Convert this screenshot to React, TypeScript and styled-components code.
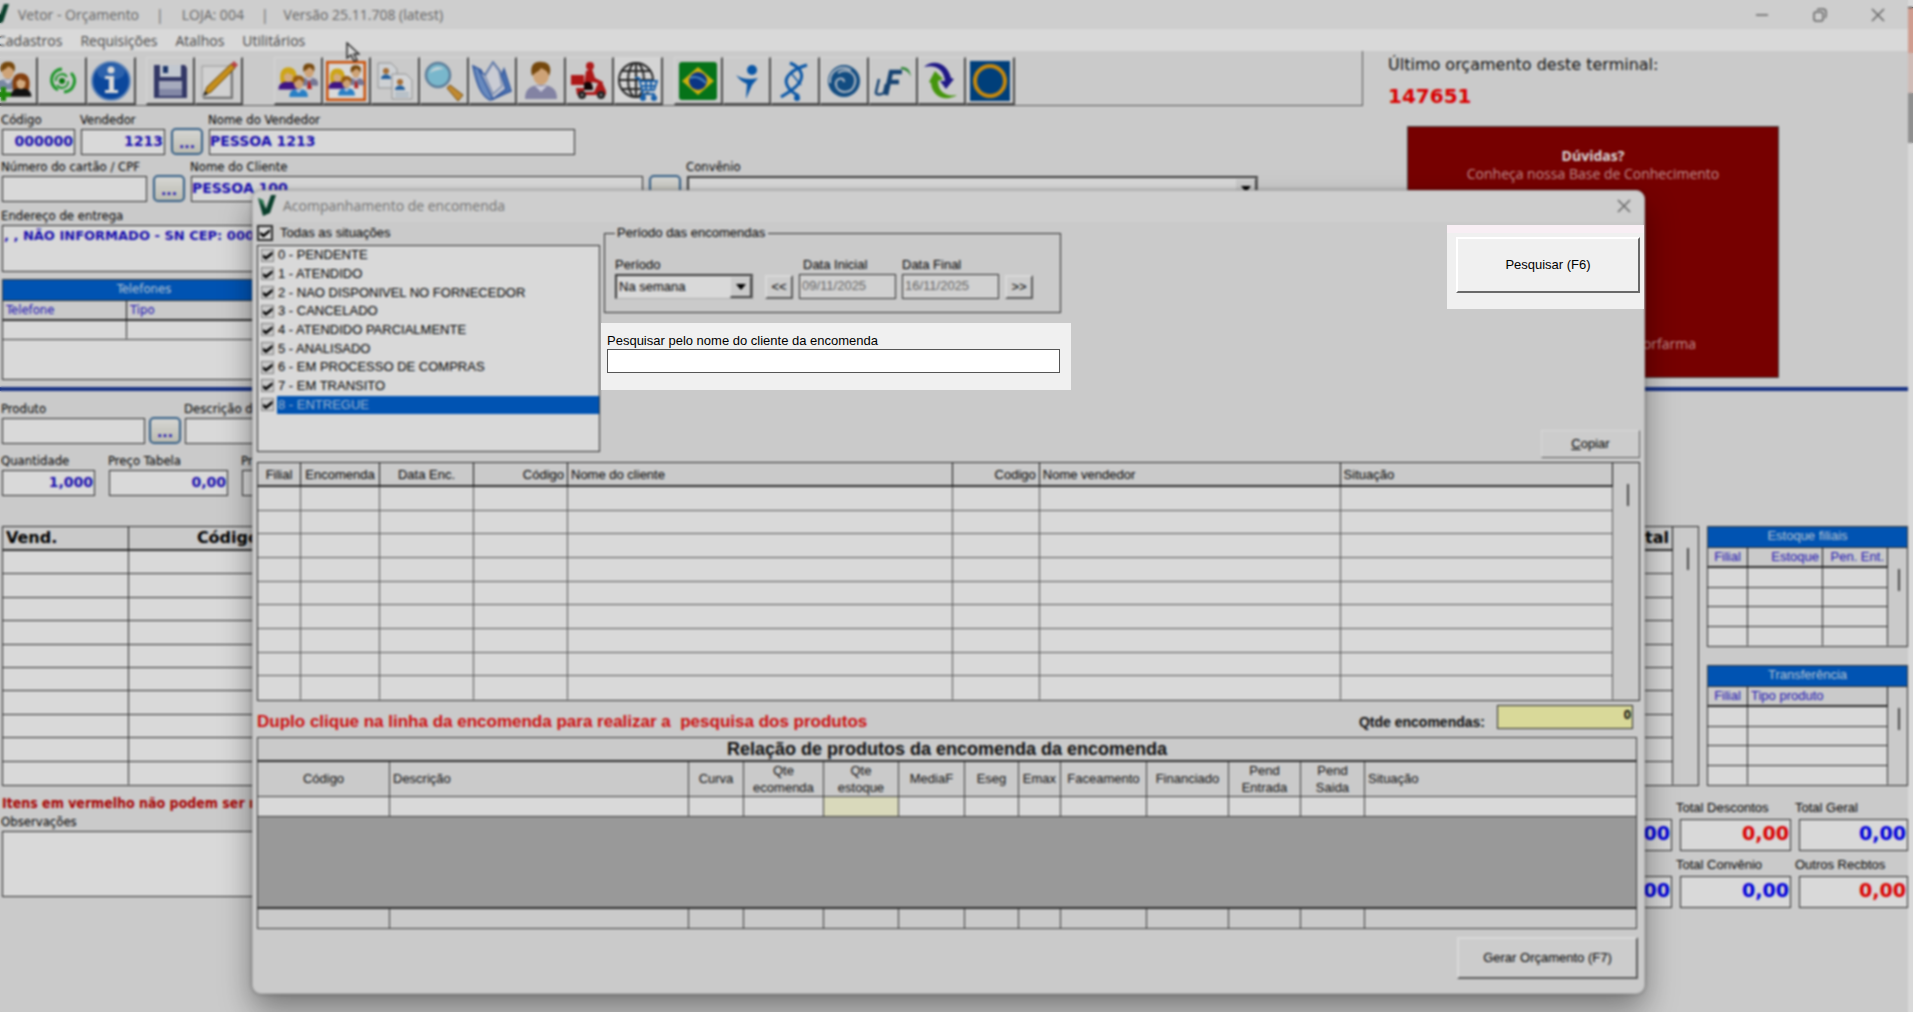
import React from "react";
import styled, { createGlobalStyle, css } from "styled-components";

const ui = `"Liberation Sans", Arial, sans-serif`;
const form = `"DejaVu Sans Condensed", "DejaVu Sans", Tahoma, sans-serif`;
const wide = `"DejaVu Sans", Verdana, sans-serif`;
const chrome = `"Open Sans", "Segoe UI", sans-serif`;

const face = "#eeeeee";
const line = "#333333";
const blue = "#0062d2";
const ink = "#1c10cc";

const GlobalStyle = createGlobalStyle`
  *, *::before, *::after { box-sizing: border-box; }
  body { margin: 0; background: ${face}; font: 13px/18px ${ui}; color: #000; overflow: hidden; }
  button, input, select, textarea { font: inherit; color: inherit; margin: 0; border-radius: 0; }
`;

/* ---------- window ---------- */

const Screen = styled.div`
  display: flex;
  min-height: 100vh;
  background: ${face};
`;

const Main = styled.main`
  flex: 1;
  min-width: 0;
`;

const Behind = styled.div`
  display: flex;
  flex-direction: column;
  width: 5px;
  background: #fff;
`;

const BehindPart = styled.span<{ $h: number; $c: string }>`
  height: ${(p) => p.$h}px;
  background: ${(p) => p.$c};
`;

const TitleBar = styled.header`
  display: flex;
  align-items: center;
  height: 29px;
  background: #f2f2f2;
  color: #777;
  font: 14px/20px ${chrome};
`;

const TitleText = styled.span<{ $gap?: number }>`
  margin-left: ${(p) => p.$gap ?? 18}px;
`;

const WindowButtons = styled.div`
  display: flex;
  gap: 18px;
  margin-left: auto;
  padding-right: 10px;
`;

const WindowButton = styled.button`
  display: grid;
  place-items: center;
  width: 40px;
  height: 26px;
  padding: 0;
  border: 0;
  background: none;
  color: #777;
`;

const MenuBar = styled.nav`
  display: flex;
  gap: 18px;
  height: 22px;
  margin-left: -3px;
  background: #fff;
  color: #555;
  font: 14px/24px ${chrome};
`;

const MenuItem = styled.button`
  padding: 0;
  border: 0;
  background: none;
  font: inherit;
`;

const Upper = styled.section`
  display: flex;
  min-height: 336px;
`;

const Workspace = styled.div`
  flex: 1;
  min-width: 0;
`;

const ToolBar = styled.div`
  display: flex;
  align-items: flex-end;
  height: 55px;
  border-right: 1px solid #666;
  border-bottom: 1px solid #666;
  overflow: hidden;
`;

const ToolGroup = styled.div<{ $w: number; $gap: number }>`
  display: flex;
  flex: none;
  width: ${(p) => p.$w}px;
  margin-left: ${(p) => p.$gap}px;
`;

const ToolButton = styled.button<{ $light?: boolean }>`
  display: grid;
  place-items: center;
  flex: 1;
  min-width: 0;
  height: 48px;
  padding: 0;
  border: solid;
  border-width: 1px 2px 2px 1px;
  border-color: #fafafa #555 #555 #fafafa;
  background: ${(p) => (p.$light ? "#fafafa" : face)};

  svg { width: 40px; height: 40px; display: block; }
`;

const Info = styled.aside`
  width: 545px;
  padding: 4px 0 0 25px;
  font: 16px/20px ${wide};
  color: #111;
`;

const BudgetNumber = styled.strong`
  display: block;
  margin: 9px 0 18px;
  font-size: 20px;
  line-height: 24px;
  color: #f00;
`;

const HelpCard = styled.div`
  display: flex;
  flex-direction: column;
  justify-content: space-between;
  width: 372px;
  height: 252px;
  margin-left: 19px;
  padding: 20px 82px 24px 0;
  border: 1px solid #555;
  background: #8b0000;
  color: #e0a8a8;
  font: 14px/18px ${chrome};
  text-align: right;
`;

const HelpText = styled.p`
  margin: 0 -82px 0 0;
  text-align: center;

  strong { display: block; color: #fff; }
`;

const HelpFoot = styled.span``;

/* ---------- form pieces ---------- */

const FormArea = styled.div`
  padding: 5px 0 0 2px;
`;

const Row = styled.div<{ $top?: number; $gap?: number }>`
  display: flex;
  align-items: flex-end;
  gap: ${(p) => p.$gap ?? 6}px;
  margin-top: ${(p) => p.$top ?? 0}px;
`;

const FieldBox = styled.div<{ $w?: number }>`
  flex: none;
  width: ${(p) => (p.$w ? p.$w + "px" : "auto")};
  font: 13px/18px ${form};
  color: #000;
  white-space: nowrap;

  label { display: block; margin-left: -1px; }
`;

const boxed = css`
  display: block;
  width: 100%;
  border: 1px solid ${line};
  outline: 0;
  background: #fff;
`;

const TextBox = styled.input<{ $right?: boolean }>`
  ${boxed}
  height: 26px;
  padding: 0 1px 3px 0;
  font: bold 14px/20px ${wide};
  color: ${ink};
  text-align: ${(p) => (p.$right ? "right" : "left")};
`;

const Area = styled.textarea<{ $h: number }>`
  ${boxed}
  height: ${(p) => p.$h}px;
  padding: 1px;
  resize: none;
  font: bold 13px/18px ${wide};
  color: ${ink};
`;

const Dots = styled.button`
  flex: none;
  width: 32px;
  height: 27px;
  padding: 2px 0 0;
  border: 2px solid #3d6f9e;
  border-radius: 5px;
  background: linear-gradient(#fcfcf8, #dcdcd0);
  font: bold 14px/20px ${wide};
  color: ${ink};
`;

const PlainSelect = styled.select`
  grid-area: 1 / 1 / 2 / 3;
  width: 100%;
  padding: 0 2px;
  border: 0;
  appearance: none;
  background: none;
  outline: 0;
`;

const Picker = styled.div<{ $h: number }>`
  display: grid;
  grid-template-columns: 1fr 22px;
  height: ${(p) => p.$h}px;
  border: solid;
  border-width: 2px 1px 1px 2px;
  border-color: #444 #888 #ccc #444;
  background: #fff;
`;

const PickerArrow = styled.span`
  grid-area: 1 / 2;
  display: grid;
  place-items: center;
  border: solid;
  border-width: 1px 2px 2px 1px;
  border-color: #fff #555 #555 #fff;
  background: ${face};
  pointer-events: none;
`;

const ArrowGlyph = () => (
  <PickerArrow>
    <svg width="10" height="6" viewBox="0 0 10 6" aria-hidden="true"><path d="M0 0h10L5 6z" /></svg>
  </PickerArrow>
);

type FieldProps = { id: string; label: string; value?: string; w: number; right?: boolean };

function Field({ id, label, value, w, right }: FieldProps) {
  return (
    <FieldBox $w={w}>
      <label htmlFor={id}>{label}</label>
      <TextBox id={id} defaultValue={value} $right={right} />
    </FieldBox>
  );
}

const Divider = styled.hr`
  height: 4px;
  margin: 0;
  border: 0;
  background: #1b3a9c;
`;

/* ---------- grids ---------- */

const GridFrame = styled.div<{ $h: number }>`
  display: flex;
  align-items: stretch;
  height: ${(p) => p.$h}px;
  border: 1px solid ${line};
`;

const GridTable = styled.table<{ $blue?: boolean; $big?: boolean; $soft?: boolean }>`
  flex: 1;
  width: 100%;
  min-width: 0;
  height: 100%;
  border-collapse: separate;
  border-spacing: 0;
  table-layout: fixed;
  background: #fff;

  th {
    height: ${(p) => (p.$blue ? 20 : 24)}px;
    padding: ${(p) => (p.$soft ? "2px 3px 0" : "0 3px")};
    overflow: hidden;
    border-right: 1px solid #111;
    border-bottom: 2px solid #333;
    background: ${face};
    color: ${(p) => (p.$blue ? "#2414d0" : "#000")};
    font: ${(p) => (p.$big ? `bold 16px/20px ${wide}` : `13px/18px ${ui}`)};
    white-space: nowrap;
  }

  td {
    padding: 0;
    border-right: 1px solid ${(p) => (p.$soft ? "#666" : "#333")};
    border-bottom: 1px solid ${(p) => (p.$soft ? "#666" : "#333")};
  }

  tbody tr:last-child td { border-bottom-color: transparent; }
`;

const HeadCell = styled.th<{ $align?: string }>`
  && { text-align: ${(p) => p.$align ?? "left"}; }
`;

const Gutter = styled.div<{ $w: number }>`
  flex: none;
  width: ${(p) => p.$w}px;
  padding: 21px 0 0 ${(p) => Math.round(p.$w * 0.54)}px;
  background: ${face};
`;

const Thumb = styled.span`
  display: block;
  width: 2px;
  height: 22px;
  background: #555;
`;

type Col = { label: string; w?: string; align?: string };
type GridProps = { cols: Col[]; rows: number; gutter?: number; blue?: boolean; big?: boolean; soft?: boolean };

function DataGrid({ cols, rows, gutter, ...look }: GridProps) {
  return (
    <>
      <GridTable $blue={look.blue} $big={look.big} $soft={look.soft}>
        <colgroup>
          {cols.map((c) => <col key={c.label} width={c.w} />)}
        </colgroup>
        <thead>
          <tr>
            {cols.map((c) => <HeadCell key={c.label} scope="col" $align={c.align}>{c.label}</HeadCell>)}
          </tr>
        </thead>
        <tbody>
          {Array.from({ length: rows }, (_, r) => (
            <tr key={r}>{cols.map((c) => <td key={c.label} />)}</tr>
          ))}
        </tbody>
      </GridTable>
      {gutter && <Gutter $w={gutter}><Thumb /></Gutter>}
    </>
  );
}

const Caption = styled.h2<{ $wide?: boolean }>`
  height: 21px;
  margin: 0;
  border: 1px solid #444;
  border-bottom: 0;
  background: ${blue};
  color: #d8e6f6;
  font: 13px/18px ${(p) => (p.$wide ? form : ui)};
  text-align: center;
`;

const Phones = styled.div`
  width: 284px;
  margin-top: 7px;
`;

const PhoneBody = styled.div`
  height: 80px;
  border: 1px solid ${line};
  background: #fff;

  table { height: auto; border-bottom: 1px solid #444; }
  th { font-family: ${form}; }
  td { height: 18px; }
`;

const Lower = styled.section`
  padding: 9px 0 0 2px;
`;

const Stock = styled.div`
  display: flex;
  gap: 8px;
  margin-top: 30px;
`;

const StockMain = styled.div`
  flex: 1;
  min-width: 0;
`;

const StockSide = styled.div`
  display: flex;
  flex-direction: column;
  justify-content: space-between;
  flex: none;
  width: 201px;
`;

const Closing = styled.div`
  display: flex;
  justify-content: space-between;
  padding-top: 7px;
`;

const Notes = styled.div`
  width: 60%;
`;

const Warning = styled.p`
  margin: 0;
  color: #c40000;
  font: bold 14px/20px ${form};
`;

const Totals = styled.div`
  display: grid;
  grid-template-columns: 111px 111px 109px;
  align-content: start;
  column-gap: 8px;
  row-gap: 5px;
  padding-top: 6px;
`;

const TotalField = styled(FieldBox)`
  font-family: ${ui};
  label { margin: 0 0 2px -4px; }
`;

const TotalBox = styled(TextBox)<{ $red?: boolean }>`
  height: 32px;
  padding-bottom: 5px;
  font-size: 19px;
  color: ${(p) => (p.$red ? "#f00" : "#00f")};
`;

/* ---------- dialog ---------- */

const Dialog = styled.div`
  position: absolute;
  top: 190px;
  left: 252px;
  right: 268px;
  border: 1px solid #d0d0d0;
  border-radius: 9px;
  background: ${face};
  box-shadow: 0 16px 32px rgba(0, 0, 0, 0.4), 0 0 4px rgba(0, 0, 0, 0.3);
`;

const DialogTitle = styled.div`
  display: flex;
  align-items: center;
  height: 31px;
  padding: 0 0 2px 4px;
  border-radius: 9px 9px 0 0;
  background: #f2f2f2;
  color: #888;
  font: 14px/20px ${chrome};

  h1 { margin: 0 auto 0 6px; font: inherit; }
`;

const Filters = styled.div`
  display: flex;
  padding: 3px 0 4px 4px;
`;

const Situations = styled.div`
  flex: none;
  width: 343px;
`;

const CheckLine = styled.label<{ $tall?: boolean; $on?: boolean }>`
  display: flex;
  align-items: center;
  gap: ${(p) => (p.$tall ? 6 : 3)}px;
  padding: ${(p) => (p.$tall ? "0 0 4px" : "0 0 0 3px")};

  span {
    flex: 1;
    padding-left: 1px;
    line-height: ${(p) => (p.$tall ? 16 : 18)}px;
    background: ${(p) => (p.$on ? blue : "transparent")};
    color: ${(p) => (p.$on ? "#b8d4f4" : "#000")};
  }
`;

const Check = styled.input<{ $big?: boolean }>`
  display: grid;
  place-items: center;
  flex: none;
  width: ${(p) => (p.$big ? 16 : 13)}px;
  height: ${(p) => (p.$big ? 16 : 13)}px;
  appearance: none;
  border: ${(p) => (p.$big ? "2px solid #333" : "1px solid #999")};
  background: ${(p) => (p.$big ? "#fff" : "#eee")};

  &:checked::before {
    content: "";
    width: 10px;
    height: 9px;
    background: #000;
    clip-path: polygon(0 35%, 35% 62%, 100% 5%, 100% 40%, 35% 100%, 0 70%);
  }
`;

const List = styled.div`
  display: grid;
  grid-auto-rows: 1fr;
  height: 207px;
  margin-bottom: 6px;
  padding-bottom: 37px;
  border: 1px solid ${line};
  background: #fff;
`;

const Middle = styled.div`
  flex: none;
  width: 470px;
  margin-left: 1px;
`;

const Period = styled.fieldset`
  width: 457px;
  height: 88px;
  min-width: 0;
  margin: 0 0 10px 3px;
  padding: 15px 10px 0;
  border: 1px solid ${line};
  color: #000;

  legend { padding: 0 3px 0 2px; line-height: 16px; }
`;

const PeriodRow = styled.div<{ $gap: number }>`
  display: flex;
  align-items: flex-end;
  gap: ${(p) => p.$gap}px;
`;

const PeriodField = styled.div<{ $w: number; $indent?: number }>`
  width: ${(p) => p.$w}px;
  label { display: block; padding-left: ${(p) => p.$indent ?? 0}px; }
`;

const DateBox = styled.input`
  ${boxed}
  height: 25px;
  padding: 0 2px 3px;
  background: #f6f6f6;
  color: #777;
`;

const PushButton = styled.button<{ $w: string; $h: number; $thin?: boolean }>`
  flex: none;
  width: ${(p) => p.$w};
  height: ${(p) => p.$h}px;
  padding: 0;
  border: solid;
  border-width: ${(p) => (p.$thin ? "1px" : "2px")};
  border-color: #fff #696969 #696969 #fff;
  background: #f0f0f0;
  color: #000;
  font: 13px/18px ${ui};
`;

/* lit areas stay above the dimming veil */
const Lit = styled.div`
  position: relative;
  z-index: 3;
  background: #f0f0f0;
`;

const ClientSearch = styled(Lit)`
  padding: 9px 11px 17px 6px;
  label { display: block; line-height: 17px; }
`;

const ClientBox = styled.input`
  ${boxed}
  height: 24px;
  border-color: #555;
`;

const Actions = styled.div`
  display: flex;
  flex-direction: column;
  align-items: flex-end;
  justify-content: space-between;
  margin-left: auto;
`;

const SearchSpot = styled(Lit)`
  width: 197px;
  padding: 12px 4px 16px 9px;
  background: linear-gradient(#f8eef4 8px, #f0f0f0 8px);
`;

const CopySlot = styled.div`
  padding-right: 4px;
`;

const Results = styled.div`
  padding: 0 4px;
`;

const Summary = styled.div`
  display: flex;
  align-items: center;
  height: 36px;
  padding: 6px 11px 0 4px;
`;

const Hint = styled.p`
  margin: 0 auto 0 0;
  color: #f01010;
  font: bold 17px/20px ${ui};
  white-space: pre;
`;

const CountLabel = styled.label`
  margin-right: 12px;
  font: bold 14px/20px ${ui};
  color: #111;
`;

const Count = styled.input`
  ${boxed}
  align-self: flex-start;
  width: 136px;
  height: 24px;
  margin-top: -2px;
  padding: 0 1px 5px;
  background: #ffffb4;
  font: bold 13px/18px ${ui};
  text-align: right;
`;

const Products = styled.table`
  width: calc(100% - 11px);
  margin-left: 4px;
  border: 1px solid ${line};
  border-collapse: collapse;
  table-layout: fixed;
  color: #111;

  th, td {
    padding: 0 3px;
    border: 1px solid #444;
    font-weight: normal;
    line-height: 17px;
  }
`;

const ProductsTitle = styled.th`
  && {
    height: 23px;
    border-bottom: 2px solid #333;
    font: bold 18px/20px ${ui};
    color: #111;
  }
`;

const ProductHead = styled.th<{ $left?: boolean }>`
  height: 34px;
  text-align: ${(p) => (p.$left ? "left" : "center")};
  white-space: pre;
`;

const ProductCell = styled.td<{ $fill: string }>`
  height: 20px;
  background: ${(p) => p.$fill};
`;

const EmptyArea = styled.td`
  height: 92px;
  && { border-bottom: 2px solid #333; }
  background: #b4b4b4;
`;

const DialogFoot = styled.div`
  display: flex;
  justify-content: flex-end;
  padding: 8px 6px 14px;
`;

const Veil = styled.div`
  position: fixed;
  inset: 0;
  z-index: 2;
  background: rgba(0, 0, 0, 0.15);
  backdrop-filter: blur(1px);
  pointer-events: none;
`;

const Pointer = styled.svg`
  position: absolute;
  top: 42px;
  left: 346px;
  width: 14px;
  height: 21px;
`;

/* ---------- drawings ---------- */

const Mark = () => (
  <svg width="20" height="21" viewBox="0 0 20 21" aria-hidden="true">
    <path d="M1 3l5 2 3 9L14 0h5l-6 18-7 3z" fill="#0b4a33" />
    <path d="M1 3l5 2 2 8z" fill="#3f9a6a" />
  </svg>
);

const CloseGlyph = () => (
  <svg width="14" height="14" viewBox="0 0 14 14" aria-hidden="true">
    <path d="M1 1l12 12M13 1L1 13" stroke="#777" strokeWidth="1.5" />
  </svg>
);

const Man = ({ x = 0, y = 0, s = 1, shirt = "#9a9ac0", hair = "#8a5510" }) => (
  <g transform={`translate(${x} ${y}) scale(${s})`}>
    <path d="M4 38c0-9 4-14 16-14s16 5 16 14z" fill={shirt} />
    <path d="M14 25l6 6 6-6z" fill="#eef" />
    <ellipse cx="20" cy="14" rx="8" ry="10" fill="#f3c08c" />
    <path d="M11 15C8 4 14 0 21 1c8 0 10 7 7 14-1-5-4-6-8-8-2 4-6 4-9 8z" fill={hair} />
  </g>
);

const Woman = ({ x = 0, y = 0, s = 1, hair = "#f2c21a", dress = "#4a189a" }) => (
  <g transform={`translate(${x} ${y}) scale(${s})`}>
    <path d="M8 28C4 10 10 2 20 2s16 8 12 26z" fill={hair} />
    <path d="M4 38c0-8 5-13 16-13s16 5 16 13z" fill={dress} />
    <ellipse cx="20" cy="17" rx="7" ry="9" fill="#f7c896" />
    <path d="M12 14c1-8 15-8 16 0-5 0-8-2-10-4-1 3-3 4-6 4z" fill={hair} />
  </g>
);

const Family = () => (
  <>
    <Man x={19} y={2} s={0.6} shirt="#8c8cae" />
    <path d="M31 18l3 10h-5z" fill="#d02020" />
    <Woman x={-2} y={5} s={0.62} />
    <Man x={9} y={14} s={0.58} shirt="#2f96e8" hair="#b06a14" />
  </>
);

const icons: Record<string, React.ReactNode> = {
  "Novo cliente": (
    <>
      <Man x={0} y={0} s={0.75} shirt="#8fa0c0" />
      <Woman x={15} y={11} s={0.65} hair="#9a4a12" dress="#151515" />
      <path d="M8 26h5v5h5v5h-5v4H8v-4H3v-5h5z" fill="#26a010" />
    </>
  ),
  Atualizar: (
    <g fill="none" stroke="#22b030" strokeWidth="3">
      <path d="M20 8a11 11 0 0 0-4 21M22 31a11 11 0 0 0 7-19" />
      <path d="M14 20a6 6 0 0 1 11-4M26 20a6 6 0 0 1-11 4" strokeWidth="2" />
      <circle cx="20" cy="20" r="3" fill="#0a8a10" stroke="none" />
    </g>
  ),
  Informações: (
    <>
      <circle cx="20" cy="20" r="19" fill="#0e54b8" stroke="#7aa2d8" strokeWidth="2" />
      <ellipse cx="20" cy="11" rx="14" ry="8" fill="#5a92dc" opacity=".5" />
      <circle cx="20" cy="9" r="3.5" fill="#fff" />
      <path d="M14 15h9v14h4v3H14v-3h4V18h-4z" fill="#fff" />
    </>
  ),
  Salvar: (
    <>
      <path d="M4 4h31l2 3v30H4z" fill="#3c4278" />
      <path d="M10 4h21v12H10z" fill="#e4ebf5" />
      <path d="M13 5h5v7h-5z" fill="#22407c" />
      <path d="M9 20h23v15H9z" fill="#c4c9de" />
      <path d="M9 28h23v7H9z" fill="#9aa0c4" />
    </>
  ),
  Editar: (
    <>
      <path d="M4 5h29v31H4z" fill="#f6f6f6" stroke="#b0b0b0" />
      <path d="M5 37h29V9" fill="none" stroke="#888" strokeWidth="2" />
      <path d="M6 34l3-8L33 3l4 4L13 31z" fill="#e8a820" stroke="#7a4e08" />
      <path d="M33 3l3-3 4 4-3 3z" fill="#d85050" />
      <path d="M5 35l2-5 3 3z" fill="#222" />
    </>
  ),
  Clientes: <Family />,
  Encomendas: (
    <>
      <path d="M1 1h38v38H1z" fill="#fff" stroke="#f0600c" strokeWidth="3" />
      <g transform="translate(2 2) scale(.9)"><Family /></g>
    </>
  ),
  Copiar: (
    <g stroke="#aaa">
      <path d="M3 2h13l6 6v19H3z" fill="#f2f6fa" />
      <circle cx="11" cy="10" r="3" fill="#c08040" stroke="none" />
      <path d="M6 18c0-6 10-6 10 0z" fill="#2a70b8" stroke="none" />
      <path d="M17 13h14l6 6v19H17z" fill="#f8fafc" />
      <circle cx="25" cy="21" r="3" fill="#c08040" stroke="none" />
      <path d="M20 29c0-6 10-6 10 0z" fill="#2a70b8" stroke="none" />
      <path d="M20 32h14M20 35h14" stroke="#9ab4cc" />
    </g>
  ),
  Pesquisar: (
    <>
      <path d="M26 24l13 10-5 6-11-13z" fill="#e2a23a" stroke="#8a5a10" />
      <circle cx="14" cy="14" r="12" fill="#8fd8f0" stroke="#6d93b4" strokeWidth="2.5" />
      <path d="M6 12c2-6 9-8 14-4-4 0-9 1-14 4z" fill="#fff" opacity=".8" />
    </>
  ),
  Livro: (
    <g stroke="#3a66b8" strokeWidth="1.5">
      <path d="M1 5l8 4 12 29-3 1C12 36 6 30 1 5z" fill="#7aa2e0" />
      <path d="M21 38L32 8l7 22z" fill="#5c8ad4" />
      <path d="M7 9l6 5 8-13 7 9 6 18-13 10z" fill="#dfe4f4" />
      <path d="M13 15l8 18 9-8-3-15-6-8z" fill="#eef0fa" stroke="#8fa4cc" />
    </g>
  ),
  Vendedor: <Man />,
  Entrega: (
    <>
      <circle cx="20" cy="5" r="4" fill="#cc2020" />
      <path d="M16 10l6-2 3 9 8 4-1 2-10-2-2 3h-6z" fill="#cc1c1c" />
      <path d="M1 14h13v10H1z" fill="#cc1c1c" />
      <path d="M14 22c6-3 9 0 9 7h-9z" fill="#180404" />
      <path d="M6 27h8v4h10l5-11 3 1 4 9v4H7z" fill="#cc1c1c" />
      <circle cx="12" cy="34" r="4" fill="#2a2a2a" />
      <circle cx="31" cy="34" r="4" fill="#2a2a2a" />
      <circle cx="12" cy="34" r="1" fill="#ddd" />
      <circle cx="31" cy="34" r="1" fill="#ddd" />
    </>
  ),
  "Loja virtual": (
    <>
      <g fill="none" stroke="#2b2b2b" strokeWidth="2">
        <circle cx="18" cy="19" r="17" />
        <ellipse cx="18" cy="19" rx="8" ry="17" />
        <path d="M18 2v34M1 19h34M4 10h28M4 28h28" />
      </g>
      <path d="M20 19h20l-3 12H25z" fill="#fafafa" />
      <g fill="none" stroke="#1a70c8" strokeWidth="2">
        <path d="M17 17h4l4 16h12" />
        <path d="M22 20h17l-3 9H24M28 20v9M33 20v9M23 25h15" />
      </g>
      <circle cx="25" cy="37" r="3" fill="#1a70c8" />
      <circle cx="36" cy="37" r="3" fill="#1a70c8" />
    </>
  ),
  "Farmácia Popular": (
    <>
      <rect x="1" y="1" width="38" height="38" rx="3" fill="#06881e" />
      <path d="M20 6l16 14-16 14L4 20z" fill="#f2cf10" />
      <circle cx="20" cy="20" r="9" fill="#0d3f9c" />
      <path d="M12 17c6-3 11 0 16 5" stroke="#5aa0e0" strokeWidth="2" fill="none" />
    </>
  ),
  "Convênio A": (
    <g fill="#0c66c4">
      <circle cx="25" cy="9" r="5" />
      <path d="M9 14c6 4 12 5 22 3l-6 7-6 14 1-15c-5-2-8-5-11-9z" />
    </g>
  ),
  "Convênio B": (
    <g fill="none" stroke="#0c66c4" strokeWidth="3">
      <path d="M15 2c10 4 15 12 9 20-4 6-10 9-18 14" />
      <path d="M32 4C18 8 8 16 12 24c2 5 6 8 12 11" />
      <path d="M16 12l10 12" strokeWidth="1.5" />
      <circle cx="22" cy="37" r="3" fill="#0c66c4" stroke="none" />
    </g>
  ),
  "Convênio C": (
    <>
      <circle cx="20" cy="20" r="16" fill="#165a98" />
      <path d="M6 22C5 10 17 3 27 9M20 21c0-6-9-4-8 3 1 9 17 10 19-2 2-10-9-16-17-10" fill="none" stroke="#d4dde8" strokeWidth="2" />
    </>
  ),
  "Convênio D": (
    <g fill="none" stroke="#1b4f86">
      <path d="M6 18L3 31c-1 3 4 3 8 1l2-9" strokeWidth="2.5" />
      <path d="M29 11H18l-5 23M15 21h11" strokeWidth="4.5" />
      <path d="M28 6c6 0 9 2 10 10-2-5-5-7-10-8z" fill="#38a040" stroke="none" />
    </g>
  ),
  "Convênio E": (
    <>
      <path d="M3 6C13-3 27 3 30 17l3 1-8 10-6-8h5C23 9 15 3 3 6z" fill="#251d9e" />
      <path d="M36 34C25 41 11 36 10 22l-2-1 6-11 8 8-5 2c0 11 8 16 19 14z" fill="#52b010" />
    </>
  ),
  "Convênio F": (
    <>
      <path d="M0 0h40v40H0z" fill="#004a90" />
      <circle cx="20" cy="20" r="15" fill="none" stroke="#e8a010" strokeWidth="4" />
    </>
  ),
};

const toolGroups: { w: number; gap: number; names: string[] }[] = [
  { w: 147, gap: -11, names: ["Novo cliente", "Atualizar", "Informações"] },
  { w: 97, gap: 10, names: ["Salvar", "Editar"] },
  { w: 389, gap: 31, names: ["Clientes", "Encomendas", "Copiar", "Pesquisar", "Livro", "Vendedor", "Entrega", "Loja virtual"] },
  { w: 341, gap: 11, names: ["Farmácia Popular", "Convênio A", "Convênio B", "Convênio C", "Convênio D", "Convênio E", "Convênio F"] },
];

/* ---------- data ---------- */

const situations = [
  "0 - PENDENTE", "1 - ATENDIDO", "2 - NAO DISPONIVEL NO FORNECEDOR", "3 - CANCELADO",
  "4 - ATENDIDO PARCIALMENTE", "5 - ANALISADO", "6 - EM PROCESSO DE COMPRAS", "7 - EM TRANSITO", "8 - ENTREGUE",
];

const orderCols: Col[] = [
  { label: "Filial", w: "43", align: "center" },
  { label: "Encomenda", w: "79", align: "center" },
  { label: "Data Enc.", w: "94", align: "center" },
  { label: "Código", w: "94", align: "right" },
  { label: "Nome do cliente", w: "28.4%" },
  { label: "Codigo", w: "87", align: "right" },
  { label: "Nome vendedor", w: "22.2%" },
  { label: "Situação" },
];

const productCols: [string, number | undefined][] = [
  ["Código", 132], ["Descrição", undefined], ["Curva", 55], ["Qte\necomenda", 80], ["Qte\nestoque", 75],
  ["MediaF", 66], ["Eseg", 54], ["Emax", 42], ["Faceamento", 86], ["Financiado", 82],
  ["Pend\nEntrada", 72], ["Pend\nSaida", 64], ["Situação", 272],
];

const totals = [
  { label: "Total Produtos" },
  { label: "Total Descontos", red: true },
  { label: "Total Geral" },
  { label: "Total Recebido" },
  { label: "Total Convênio" },
  { label: "Outros Recbtos", red: true },
];

/* ---------- screen ---------- */

function BudgetScreen() {
  return (
    <Main>
      <TitleBar>
        <svg width="10" height="21" viewBox="10 0 10 21" aria-hidden="true">
          <path d="M9 14L14 0h5l-6 18-7 3z" fill="#0b4a33" />
        </svg>
        <TitleText $gap={8}>Vetor - Orçamento</TitleText>
        <TitleText $gap={17}>|</TitleText>
        <TitleText $gap={18}>LOJA: 004</TitleText>
        <TitleText $gap={17}>|</TitleText>
        <TitleText $gap={15}>Versão 25.11.708 (latest)</TitleText>
        <WindowButtons>
          <WindowButton aria-label="Minimizar">
            <svg width="12" height="12" viewBox="0 0 12 12"><path d="M0 6h12" stroke="#777" strokeWidth="1.5" /></svg>
          </WindowButton>
          <WindowButton aria-label="Restaurar">
            <svg width="14" height="14" viewBox="0 0 14 14" fill="none" stroke="#777" strokeWidth="1.5">
              <rect x="1" y="4" width="9" height="9" rx="2" />
              <path d="M4 2Q5 1 7 1h3q3 0 3 3v3q0 2-1 3" />
            </svg>
          </WindowButton>
          <WindowButton aria-label="Fechar"><CloseGlyph /></WindowButton>
        </WindowButtons>
      </TitleBar>
      <MenuBar>
        {["Cadastros", "Requisições", "Atalhos", "Utilitários"].map((m) => <MenuItem key={m}>{m}</MenuItem>)}
      </MenuBar>

      <Upper>
        <Workspace>
          <ToolBar>
            {toolGroups.map((g) => (
              <ToolGroup key={g.w} $w={g.w} $gap={g.gap}>
                {g.names.map((n) => (
                  <ToolButton key={n} aria-label={n} $light={n === "Loja virtual"}>
                    <svg viewBox="0 0 40 40">{icons[n]}</svg>
                  </ToolButton>
                ))}
              </ToolGroup>
            ))}
          </ToolBar>
          <FormArea>
            <Row>
              <Field id="codigo" label="Código" value="000000" w={73} right />
              <Field id="vendedor" label="Vendedor" value="1213" w={84} right />
              <Dots aria-label="Buscar vendedor">...</Dots>
              <Field id="nomeVendedor" label="Nome do Vendedor" value="PESSOA 1213" w={366} />
            </Row>
            <Row $top={3}>
              <Field id="cpf" label="Número do cartão / CPF" w={145} />
              <Dots aria-label="Buscar cartão">...</Dots>
              <Field id="cliente" label="Nome do Cliente" value="PESSOA 100" w={452} />
              <Dots aria-label="Buscar cliente">...</Dots>
              <FieldBox $w={571}>
                <label htmlFor="convenio">Convênio</label>
                <Picker $h={26}>
                  <PlainSelect id="convenio" />
                  <ArrowGlyph />
                </Picker>
              </FieldBox>
            </Row>
            <Row $top={5}>
              <FieldBox $w={640}>
                <label htmlFor="endereco">Endereço de entrega</label>
                <Area id="endereco" $h={47} defaultValue=", , NÃO INFORMADO - SN CEP: 00000-000" />
              </FieldBox>
            </Row>
            <Phones>
              <Caption $wide>Telefones</Caption>
              <PhoneBody>
                <DataGrid blue rows={1} cols={[{ label: "Telefone", w: "124" }, { label: "Tipo" }]} />
              </PhoneBody>
            </Phones>
          </FormArea>
        </Workspace>
        <Info>
          Último orçamento deste terminal:
          <BudgetNumber>147651</BudgetNumber>
          <HelpCard>
            <HelpText><strong>Dúvidas?</strong>Conheça nossa Base de Conhecimento</HelpText>
            <HelpFoot>vetorfarma</HelpFoot>
          </HelpCard>
        </Info>
      </Upper>

      <Divider />

      <Lower>
        <Row $gap={4}>
          <Field id="produto" label="Produto" w={143} />
          <Dots aria-label="Buscar produto">...</Dots>
          <Field id="descricao" label="Descrição do" w={600} />
        </Row>
        <Row $top={8} $gap={14}>
          <Field id="qtd" label="Quantidade" value="1,000" w={93} right />
          <Field id="tabela" label="Preço Tabela" value="0,00" w={119} right />
          <Field id="venda" label="Preço Venda" value="0,00" w={119} right />
        </Row>
        <Stock>
          <StockMain>
            <GridFrame $h={260}>
              <DataGrid
                big
                rows={10}
                gutter={25}
                cols={[
                  { label: "Vend.", w: "126" },
                  { label: "Código", w: "134", align: "right" },
                  { label: "Descrição" },
                  { label: "Total", w: "140", align: "right" },
                ]}
              />
            </GridFrame>
          </StockMain>
          <StockSide>
            <div>
              <Caption>Estoque filiais</Caption>
              <GridFrame $h={100}>
                <DataGrid
                  blue
                  rows={4}
                  gutter={19}
                  cols={[{ label: "Filial", w: "40", align: "center" }, { label: "Estoque", w: "75", align: "right" }, { label: "Pen. Ent.", align: "right" }]}
                />
              </GridFrame>
            </div>
            <div>
              <Caption>Transferência</Caption>
              <GridFrame $h={100}>
                <DataGrid blue rows={4} gutter={19} cols={[{ label: "Filial", w: "40", align: "center" }, { label: "Tipo produto" }]} />
              </GridFrame>
            </div>
          </StockSide>
        </Stock>
        <Closing>
          <Notes>
            <Warning>Itens em vermelho não podem ser removidos</Warning>
            <FieldBox>
              <label htmlFor="obs">Observações</label>
              <Area id="obs" $h={66} />
            </FieldBox>
          </Notes>
          <Totals>
            {totals.map((t) => (
              <TotalField key={t.label}>
                <label htmlFor={t.label}>{t.label}</label>
                <TotalBox id={t.label} defaultValue="0,00" $right $red={t.red} />
              </TotalField>
            ))}
          </Totals>
        </Closing>
      </Lower>
    </Main>
  );
}

function OrderDialog() {
  return (
    <Dialog role="dialog" aria-labelledby="dialogTitle">
      <DialogTitle>
        <Mark />
        <h1 id="dialogTitle">Acompanhamento de encomenda</h1>
        <WindowButton aria-label="Fechar janela"><CloseGlyph /></WindowButton>
      </DialogTitle>

      <Filters>
        <Situations>
          <CheckLine $tall>
            <Check type="checkbox" defaultChecked $big />
            <span>Todas as situações</span>
          </CheckLine>
          <List>
            {situations.map((s, i) => (
              <CheckLine key={s} $on={i === 8}>
                <Check type="checkbox" defaultChecked />
                <span>{s}</span>
              </CheckLine>
            ))}
          </List>
        </Situations>

        <Middle>
          <Period>
            <legend>Período das encomendas</legend>
            <PeriodRow $gap={12}>
              <PeriodField $w={138}>
                <label htmlFor="periodo">Período</label>
                <Picker $h={25}>
                  <PlainSelect id="periodo"><option>Na semana</option></PlainSelect>
                  <ArrowGlyph />
                </Picker>
              </PeriodField>
              <PeriodRow $gap={6}>
                <PushButton $w="28px" $h={24}>&lt;&lt;</PushButton>
                <PeriodField $w={97} $indent={4}>
                  <label htmlFor="inicio">Data Inicial</label>
                  <DateBox id="inicio" defaultValue="09/11/2025" />
                </PeriodField>
                <PeriodField $w={97}>
                  <label htmlFor="fim">Data Final</label>
                  <DateBox id="fim" defaultValue="16/11/2025" />
                </PeriodField>
                <PushButton $w="28px" $h={24}>&gt;&gt;</PushButton>
              </PeriodRow>
            </PeriodRow>
          </Period>
          <ClientSearch>
            <label htmlFor="nomeCliente">Pesquisar pelo nome do cliente da encomenda</label>
            <ClientBox id="nomeCliente" />
          </ClientSearch>
        </Middle>

        <Actions>
          <SearchSpot><PushButton $w="100%" $h={56}>Pesquisar (F6)</PushButton></SearchSpot>
          <CopySlot><PushButton $w="99px" $h={28} $thin><u>C</u>opiar</PushButton></CopySlot>
        </Actions>
      </Filters>

      <Results>
        <GridFrame $h={239}>
          <DataGrid soft rows={9} gutter={26} cols={orderCols} />
        </GridFrame>
      </Results>

      <Summary>
        <Hint>{"Duplo clique na linha da encomenda para realizar a  pesquisa dos produtos"}</Hint>
        <CountLabel htmlFor="qtde">Qtde encomendas:</CountLabel>
        <Count id="qtde" defaultValue="0" />
      </Summary>

      <Products>
        <colgroup>{productCols.map(([n, w]) => <col key={n} width={w} />)}</colgroup>
        <thead>
          <tr><ProductsTitle colSpan={13}>Relação de produtos da encomenda da encomenda</ProductsTitle></tr>
          <tr>
            {productCols.map(([n]) => (
              <ProductHead key={n} scope="col" $left={n === "Descrição" || n === "Situação"}>{n}</ProductHead>
            ))}
          </tr>
        </thead>
        <tbody>
          <tr>{productCols.map(([n]) => <ProductCell key={n} $fill={n === "Qte\nestoque" ? "#ffffdc" : "#fff"} />)}</tr>
          <tr><EmptyArea colSpan={13} /></tr>
        </tbody>
        <tfoot>
          <tr>{productCols.map(([n]) => <ProductCell key={n} $fill={face} />)}</tr>
        </tfoot>
      </Products>

      <DialogFoot>
        <PushButton $w="181px" $h={42}>Gerar Orçamento (F7)</PushButton>
      </DialogFoot>
    </Dialog>
  );
}

export default function App() {
  return (
    <>
      <GlobalStyle />
      <Screen>
        <BudgetScreen />
        <Behind>
          <BehindPart $h={7} $c="#fff" />
          <BehindPart $h={1} $c="#333" />
          <BehindPart $h={45} $c="#f4b8a8" />
          <BehindPart $h={40} $c="#f4dcd6" />
          <BehindPart $h={50} $c="#a8a8a8" />
        </Behind>
      </Screen>
      <Pointer viewBox="0 0 14 21" aria-hidden="true">
        <path d="M1 1v15l4-3 3 6 3-1-3-6h5z" fill="#fff" stroke="#333" strokeWidth="1.5" />
      </Pointer>
      <OrderDialog />
      <Veil />
    </>
  );
}
